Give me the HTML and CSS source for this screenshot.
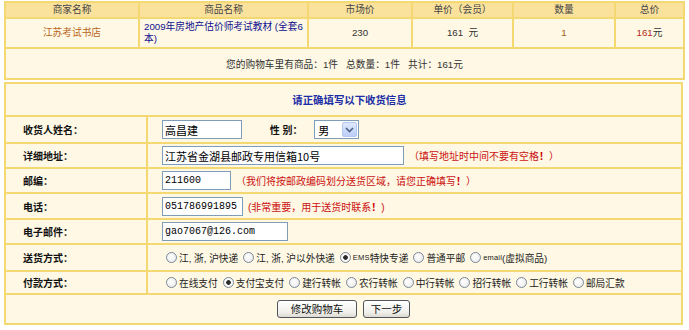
FILE: index.html
```html
<!DOCTYPE html>
<html lang="zh-CN">
<head>
<meta charset="utf-8">
<title>购物车</title>
<link rel="stylesheet" href="styles.css">
</head>
<body>
<div class="page">
  <table class="cart">
    <colgroup>
      <col class="w1"><col class="w2"><col class="w3"><col class="w4"><col class="w5"><col class="w6">
    </colgroup>
    <tr class="head">
      <th>商家名称</th><th>商品名称</th><th>市场价</th><th>单价（会员）</th><th>数量</th><th>总价</th>
    </tr>
    <tr class="item">
      <td class="shop">江苏考试书店</td>
      <td class="pname"><a href="#">2009年房地产估价师考试教材 (全套6<br>本)</a></td>
      <td>230</td>
      <td>161&nbsp;&nbsp;元</td>
      <td class="qty">1</td>
      <td><span class="price">161</span>元</td>
    </tr>
    <tr class="sum">
      <td colspan="6">您的购物车里有商品：1件&nbsp;&nbsp;&nbsp;总数量：1件&nbsp;&nbsp;&nbsp;共计：161元</td>
    </tr>
  </table>

  <form class="orderform">
  <table class="info">
    <colgroup><col class="lab"><col></colgroup>
    <tr class="title"><td colspan="2">请正确填写以下收货信息</td></tr>
    <tr class="r-name">
      <td class="label">收货人姓名：</td>
      <td class="field">
        <input class="txt w-name" type="text" value="高昌建">
        <span class="sexlabel">性&nbsp;别：</span>
        <span class="sel"><select><option>男</option><option>女</option></select><span class="selbtn"><svg width="9" height="6" viewBox="0 0 9 6"><path d="M1 1 L4.5 4.5 L8 1" fill="none" stroke="#4d6185" stroke-width="1.6"/></svg></span></span>
      </td>
    </tr>
    <tr class="r-addr">
      <td class="label">详细地址：</td>
      <td class="field"><input class="txt w-addr" type="text" value="江苏省金湖县邮政专用信箱10号"><span class="hint">（填写地址时中间不要有空格<b>！</b>）</span></td>
    </tr>
    <tr class="r-zip">
      <td class="label">邮编：</td>
      <td class="field"><input class="txt mono w-zip" type="text" value="211600"><span class="hint">（我们将按邮政编码划分送货区域，请您正确填写<b>！</b>）</span></td>
    </tr>
    <tr class="r-tel">
      <td class="label">电话：</td>
      <td class="field"><input class="txt mono w-tel" type="text" value="051786991895"><span class="hint">(非常重要，用于送货时联系<b>！</b>)</span></td>
    </tr>
    <tr class="r-mail">
      <td class="label">电子邮件：</td>
      <td class="field"><input class="txt mono w-mail" type="text" value="gao7067@126.com"></td>
    </tr>
    <tr class="r-ship">
      <td class="label">送货方式：</td>
      <td class="field">
        <div class="radios">
          <label><input type="radio" name="ship">江, 浙, 沪快递</label>
          <label><input type="radio" name="ship">江, 浙, 沪以外快递</label>
          <label><input type="radio" name="ship" checked><span class="small">EMS</span>特快专递</label>
          <label><input type="radio" name="ship">普通平邮</label>
          <label><input type="radio" name="ship"><span class="small">email</span>(虚拟商品)</label>
        </div>
      </td>
    </tr>
    <tr class="r-pay">
      <td class="label">付款方式：</td>
      <td class="field">
        <div class="radios">
          <label><input type="radio" name="pay">在线支付</label>
          <label><input type="radio" name="pay" checked>支付宝支付</label>
          <label><input type="radio" name="pay">建行转帐</label>
          <label><input type="radio" name="pay">农行转帐</label>
          <label><input type="radio" name="pay">中行转帐</label>
          <label><input type="radio" name="pay">招行转帐</label>
          <label><input type="radio" name="pay">工行转帐</label>
          <label><input type="radio" name="pay">邮局汇款</label>
        </div>
      </td>
    </tr>
    <tr class="r-btn">
      <td colspan="2"><div class="btns"><button type="button" class="btn b1">修改购物车</button><button type="button" class="btn b2">下一步</button></div></td>
    </tr>
  </table>
  </form>
</div>
</body>
</html>
```

FILE: styles.css
```css
html, body {
  margin: 0;
  padding: 0;
  background: #ffffff;
}
body {
  font-family: "Liberation Sans", "Noto Sans CJK SC", sans-serif;
  font-size: 9.7px;
  color: #333333;
}
.page {
  width: 679px;
  margin-left: 4px;
  padding-top: 1px;
}
table {
  border-collapse: collapse;
  width: 100%;
  table-layout: fixed;
}
td, th {
  padding: 0;
}

/* cart table */
.cart td, .cart th {
  border: 2px solid #f4d872;
  text-align: center;
  background: #fef8e4;
}
.w1 { width: 134px; }
.w2 { width: 169px; }
.w3 { width: 104px; }
.w4 { width: 101px; }
.w5 { width: 102px; }
.w6 { width: 69px; }
.cart .head th {
  background: #fbe29c;
  font-weight: normal;
  height: 14px;
  color: #444;
  line-height: 14px;
}
.cart .item td {
  height: 28px;
  line-height: 12px;
}
.cart .shop {
  color: #b8651b;
}
.cart .pname {
  text-align: left;
  padding-left: 4px;
}
.cart .pname a {
  color: #101090;
  text-decoration: none;
}
.cart .qty {
  color: #a25a10;
}
.cart .price {
  color: #b02a20;
}
.cart .sum td {
  height: 29px;
  color: #333;
}

/* info table */
.orderform {
  margin: 0;
  padding-top: 2px;
}
.info td {
  border: 2px solid #f4d872;
  background: #fef8e4;
}
.info .lab { width: 142px; }
.info .title td {
  height: 31px;
  text-align: center;
  padding-left: 12px;
  color: #1b2ea6;
  font-weight: bold;
  font-size: 10.4px;
}
.info .label {
  font-weight: bold;
  color: #111;
  padding-left: 17px;
  font-size: 10px;
}
.info .field {
  padding-left: 14px;
}
.r-name td { height: 25px; }
.r-addr td { height: 23px; }
.r-zip td { height: 23px; }
.r-tel td { height: 24px; }
.r-mail td { height: 23px; }
.r-ship td { height: 25px; }
.r-pay td { height: 21px; }
.r-btn td { height: 28px; }

.txt {
  box-sizing: border-box;
  height: 19px;
  border: 1px solid #7f9db9;
  background: #fff;
  padding: 0 2px;
  margin: 0;
  font-family: "Noto Sans CJK SC", sans-serif;
  font-size: 11px;
  color: #000;
  vertical-align: middle;
}
.txt.mono {
  font-family: "Liberation Mono", monospace;
  font-size: 10px;
}
.w-name { width: 80px; }
.w-addr { width: 242px; }
.w-zip { width: 69px; }
.w-tel { width: 81px; }
.w-mail { width: 126px; }

.sexlabel {
  display: inline-block;
  margin-left: 25px;
  font-weight: bold;
  color: #111;
  font-size: 10px;
  vertical-align: middle;
}
.sel {
  display: inline-flex;
  vertical-align: middle;
  margin-left: 9px;
  height: 19px;
  box-sizing: border-box;
  border: 1px solid #7f9db9;
  background: #fff;
}
.sel select {
  appearance: none;
  -webkit-appearance: none;
  border: 0;
  background: transparent;
  width: 26px;
  padding: 0 0 0 3px;
  margin: 0;
  font-family: "Noto Sans CJK SC", sans-serif;
  font-size: 11px;
  color: #000;
  outline: none;
}
.selbtn {
  width: 15px;
  margin: 1px;
  box-sizing: border-box;
  border: 1px solid #b5c8f2;
  border-radius: 2px;
  background: linear-gradient(#dfe8fc, #bdcff8);
  display: flex;
  align-items: center;
  justify-content: center;
}

.hint {
  color: #cc1111;
  margin-left: 5px;
  font-size: 10px;
  vertical-align: middle;
}
.hint b {
  font-weight: bold;
  color: #d40000;
}

.radios {
  display: flex;
  align-items: center;
  gap: 1px;
  color: #222;
}
.radios label {
  display: inline-flex;
  align-items: center;
}
.radios input {
  appearance: none;
  -webkit-appearance: none;
  width: 11px;
  height: 11px;
  margin: 0 2px 0 4px;
  border: 1px solid #7b8897;
  border-radius: 50%;
  background: radial-gradient(circle at 40% 40%, #ffffff, #e6e6e6);
  box-sizing: border-box;
}
.radios input:checked {
  background: radial-gradient(circle, #2c2c2c 0, #2c2c2c 2px, #ffffff 2.6px, #e6e6e6 100%);
}
.small {
  font-size: 7.5px;
  letter-spacing: 0.2px;
}

.btns {
  display: flex;
  justify-content: center;
  gap: 6px;
}
.btn {
  height: 18px;
  padding: 0;
  white-space: nowrap;
  border: 1px solid #50545c;
  border-radius: 3px;
  background: linear-gradient(#ffffff, #f0efea 70%, #dcdad2);
  font-family: "Noto Sans CJK SC", sans-serif;
  font-size: 10.5px;
  color: #111;
  line-height: 14px;
}
.b1 { width: 80px; }
.b2 { width: 47px; }
```
